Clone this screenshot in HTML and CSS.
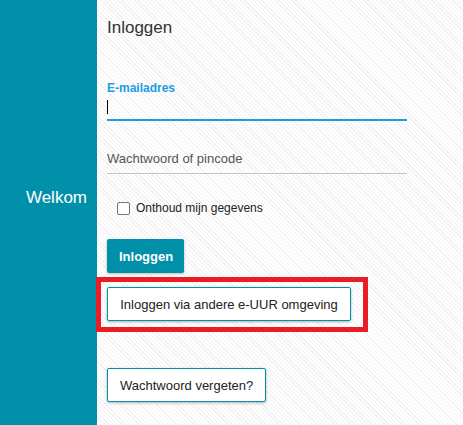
FILE: index.html
```html
<!DOCTYPE html>
<html lang="nl">
<head>
  <meta charset="UTF-8">
  <title>Inloggen</title>
  <link rel="stylesheet" href="styles.css">
</head>
<body>
  <div id="page">
    <div id="side">
      <div class="welcome">Welkom</div>
    </div>
    <div id="main">
      <h1>Inloggen</h1>
      <form id="login-form">
        <div class="field active">
          <label class="field-label">E-mailadres</label>
          <div class="field-input"><span class="caret"></span></div>
        </div>
        <div class="field">
          <div class="field-input placeholder">Wachtwoord of pincode</div>
        </div>
        <label class="remember">
          <span class="box"></span>
          Onthoud mijn gegevens
        </label>
        <button type="button" class="btn btn-primary">Inloggen</button>
        <div class="highlight">
          <button type="button" class="btn btn-outline">Inloggen via andere e-UUR omgeving</button>
        </div>
        <button type="button" class="btn btn-outline forgot">Wachtwoord vergeten?</button>
      </form>
    </div>
  </div>
</body>
</html>
```
FILE: styles.css
```css
body {
  margin: 0;
  font-family: 'Liberation Sans', Arial, sans-serif;
  background-color: #fff;
  background-image: repeating-linear-gradient(45deg, #fff 0, #fff 2px, #f1f1f1 2px, #f1f1f1 3px);
  color: #333;
}

#page {
  display: flex;
  height: 425px;
}

#side {
  width: 97px;
  flex-shrink: 0;
  background-color: #0190a9;
  display: flex;
  align-items: center;
  justify-content: flex-end;
}

.welcome {
  color: #fff;
  font-size: 17px;
  padding-right: 10px;
  margin-top: -29px;
}

#main {
  padding-left: 10px;
  width: 300px;
}

h1 {
  font-size: 17px;
  font-weight: normal;
  color: #333;
  margin: 0;
  padding-top: 18px;
  line-height: 20px;
}

.field {
  margin-top: 43px;
  border-bottom: 1px solid #c4c4c4;
}

.field.active {
  border-bottom: 2px solid #1a9de2;
}

.field-label {
  display: block;
  font-size: 12px;
  font-weight: bold;
  color: #1a9de2;
  line-height: 14px;
}

.field-input {
  height: 24px;
  display: flex;
  align-items: center;
}

.caret {
  display: inline-block;
  width: 1px;
  height: 14px;
  background-color: #000;
}

.field + .field {
  margin-top: 30px;
}

.placeholder {
  font-size: 13px;
  color: #555;
  height: 22px;
  align-items: flex-start;
}

.remember {
  display: flex;
  align-items: center;
  gap: 6px;
  font-size: 12px;
  color: #222;
  margin: 27px 0 0 10px;
}

.box {
  width: 11px;
  height: 11px;
  border: 1px solid #767676;
  border-radius: 2px;
  background: #fff;
}

.btn {
  display: block;
  font-family: 'Liberation Sans', Arial, sans-serif;
  font-size: 13px;
  height: 34px;
  padding: 0 12px;
  border-radius: 2px;
  white-space: nowrap;
  cursor: pointer;
}

.btn-primary {
  margin-top: 24px;
  background-color: #0190a9;
  color: #fff;
  font-weight: bold;
  border: none;
  box-shadow: 0 1px 3px rgba(0, 0, 0, 0.25);
  width: 77px;
}

.highlight {
  margin: 4px 0 0 -11px;
  border: 5px solid #ea1c26;
  width: 256px;
  padding: 5px 0 6px 6px;
}

.btn-outline {
  background-color: #fff;
  color: #222;
  border: 1px solid #0190a9;
  box-shadow: 0 1px 3px rgba(0, 0, 0, 0.3);
}

.highlight .btn-outline {
  width: 244px;
}

.forgot {
  margin-top: 36px;
  width: 159px;
}
```
